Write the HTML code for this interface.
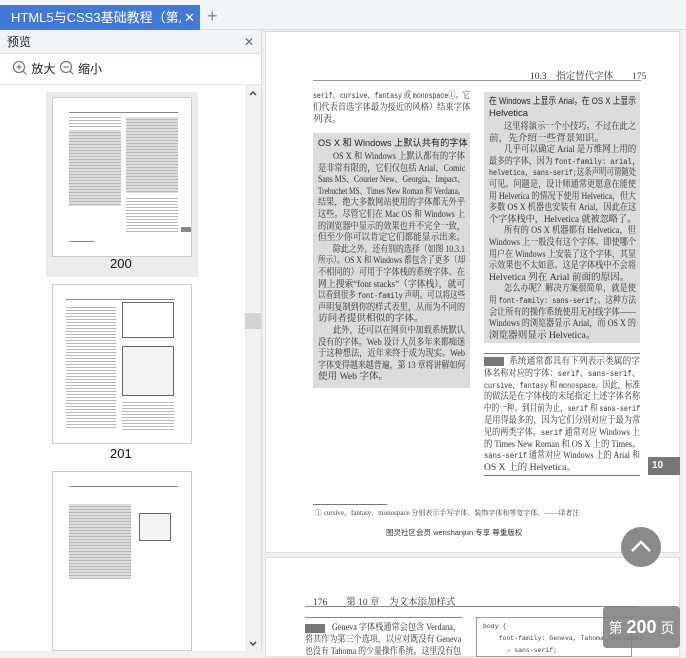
<!DOCTYPE html>
<html><head><meta charset="utf-8"><style>
*{margin:0;padding:0;box-sizing:border-box}
body{width:686px;height:651px;overflow:hidden;background:#f0f0f0;font-family:"Liberation Serif","Noto Serif CJK SC",serif;position:relative;color:#333}
.a{position:absolute;white-space:nowrap}
.s{font-family:"Liberation Sans","Noto Sans CJK SC",sans-serif}
.l{position:absolute;font-size:9.6px;line-height:12px;white-space:nowrap;color:#333;text-align:justify;text-align-last:justify;overflow:hidden;transform-origin:0 0}
.n{text-align-last:left}
.m{font-family:"Liberation Mono",monospace;font-size:8.6px}
.tx{background:repeating-linear-gradient(transparent 0 2px,#b8b8b8 2px 3px)}
</style></head><body>
<!-- top bar -->
<div class="a" style="left:0;top:0;width:686px;height:30px;background:#f3f4f6;border-bottom:1px solid #dde"></div>
<div class="a s" style="left:0;top:5px;width:200px;height:25px;background:#4379d6;color:#fff;font-size:13px;line-height:25px"><span style="position:absolute;left:11px;width:170px;overflow:hidden">HTML5与CSS3基础教程（第八版）</span><span style="position:absolute;left:184px;font-size:13px">✕</span></div>
<div class="a s" style="left:207px;top:5px;font-size:18px;line-height:22px;color:#888">+</div>
<!-- left panel -->
<div class="a" style="left:0;top:30px;width:262px;height:621px;background:#fff;border-right:1px solid #ddd"></div>
<div class="a s" style="left:0;top:30px;width:261px;height:24px;background:#f2f3f5;border-bottom:1px solid #ddd;font-size:12px;line-height:24px;padding-left:7px;color:#222">预览<span style="position:absolute;left:244px;color:#666">✕</span></div>
<div class="a s" style="left:12px;top:60px;font-size:12px;color:#222;line-height:18px">
<svg width="16" height="16" style="vertical-align:-3px" viewBox="0 0 16 16"><circle cx="7" cy="7" r="5.5" fill="none" stroke="#777" stroke-width="1.2"/><path d="M4.5 7h5M7 4.5v5M11 11l3.5 3.5" stroke="#777" stroke-width="1.2"/></svg> 放大 <svg width="16" height="16" style="vertical-align:-3px" viewBox="0 0 16 16"><circle cx="7" cy="7" r="5.5" fill="none" stroke="#777" stroke-width="1.2"/><path d="M4.5 7h5M11 11l3.5 3.5" stroke="#777" stroke-width="1.2"/></svg> 缩小</div>
<div class="a" style="left:0;top:84px;width:261px;height:1px;background:#e5e5e5"></div>
<div class="a" style="left:245px;top:85px;width:16px;height:566px;background:#f0f0f0"></div>
<div class="a" style="left:245px;top:313px;width:16px;height:16px;background:#d4d4d4"></div>
<svg class="a" style="left:249px;top:90px" width="8" height="6"><path d="M1 5L4 2L7 5" fill="none" stroke="#444" stroke-width="1.5"/></svg>
<svg class="a" style="left:249px;top:641px" width="8" height="6"><path d="M1 1L4 4L7 1" fill="none" stroke="#444" stroke-width="1.5"/></svg>
<!-- thumbs -->
<div class="a" style="left:46px;top:92px;width:152px;height:185px;background:#ebebeb"></div>
<div class="a" style="left:52px;top:97px;width:140px;height:160px;background:#fff;border:1px solid #ccc"></div>
<div class="a" style="left:69px;top:112px;width:109px;height:1px;background:#888"></div>
<div class="a tx" style="left:69px;top:115px;width:52px;height:12px"></div>
<div class="a tx" style="left:69px;top:130px;width:52px;height:76px;background-color:#ddd"></div>
<div class="a tx" style="left:126px;top:117px;width:52px;height:76px;background-color:#ddd"></div>
<div class="a tx" style="left:126px;top:196px;width:52px;height:38px"></div>
<div class="a" style="left:181px;top:227px;width:10px;height:5px;background:#888"></div>
<div class="a" style="left:69px;top:241px;width:25px;height:1px;background:#888"></div>
<div class="a s" style="left:110px;top:256px;font-size:13px;color:#111">200</div>
<div class="a" style="left:52px;top:284px;width:140px;height:160px;background:#fff;border:1px solid #ccc"></div>
<div class="a" style="left:66px;top:299px;width:109px;height:1px;background:#888"></div>
<div class="a tx" style="left:66px;top:305px;width:50px;height:125px"></div>
<div class="a" style="left:122px;top:302px;width:52px;height:36px;border:1px solid #666"></div>
<div class="a" style="left:122px;top:346px;width:52px;height:50px;border:1px solid #666;background:#f4f4f4"></div>
<div class="a tx" style="left:122px;top:400px;width:52px;height:30px"></div>
<div class="a s" style="left:110px;top:446px;font-size:13px;color:#111">201</div>
<div class="a" style="left:52px;top:471px;width:140px;height:180px;background:#fff;border:1px solid #ccc"></div>
<div class="a" style="left:69px;top:486px;width:109px;height:1px;background:#888"></div>
<div class="a tx" style="left:69px;top:504px;width:62px;height:75px;background-color:#ddd"></div>
<div class="a" style="left:139px;top:513px;width:32px;height:28px;border:1px solid #666;background:#f4f4f4"></div>
<!-- page 1 -->
<div class="a" style="left:265px;top:31px;width:415px;height:522px;background:#fff;border:1px solid #ddd"></div>
<div class="a" style="left:265px;top:557px;width:415px;height:100px;background:#fff;border:1px solid #ddd"></div>
<div class="a" style="left:682px;top:30px;width:4px;height:621px;background:#f6f6f6"></div>
<div class="a" style="left:530px;top:68px;font-size:9.5px;color:#333">10.3　指定替代字体　　175</div>
<div class="a" style="left:313px;top:80px;width:328px;height:1px;background:#999"></div>
<div class="l" style="left:313px;top:90px;width:157px"><span class="m">serif</span>、<span class="m">cursive</span>、<span class="m">fantasy</span> 或 <span class="m">monospace</span>①。它</div>
<div class="l" style="left:313px;top:102px;width:157px">们代表首选字体最为接近的风格）结束字体</div>
<div class="l n" style="left:313px;top:114px;width:157px">列表。</div>
<div class="a" style="left:313px;top:133px;width:157px;height:255px;background:#dcdcdc"></div>
<div class="l n s" style="left:318px;top:138px;width:150px;font-size:9.5px;color:#222">OS X 和 Windows 上默认共有的字体</div>
<div style="position:absolute;left:318px;top:151px;width:147px">
<div class="l" style="left:15px;top:0;width:132px">OS X 和 Windows 上默认都有的字体</div>
<div class="l" style="top:11.6px;width:147px">是非常有限的，它们仅包括 Arial、Comic</div>
<div class="l" style="top:23.2px;width:147px">Sans MS、Courier New、Georgia、Impact、</div>
<div class="l" style="top:34.8px;width:147px">Trebuchet MS、Times New Roman 和 Verdana。</div>
<div class="l" style="top:46.4px;width:147px">结果，绝大多数网站使用的字体都无外乎</div>
<div class="l" style="top:58px;width:147px">这些。尽管它们在 Mac OS 和 Windows 上</div>
<div class="l" style="top:69.6px;width:147px">的浏览器中显示的效果也并不完全一致，</div>
<div class="l n" style="top:81.2px;width:147px">但至少你可以肯定它们都能显示出来。</div>
<div class="l" style="left:15px;top:92.8px;width:132px">除此之外，还有别的选择（如图 10.3.1</div>
<div class="l" style="top:104.4px;width:147px">所示）。OS X 和 Windows 都包含了更多（却</div>
<div class="l" style="top:116px;width:147px">不相同的）可用于字体栈的系统字体。在</div>
<div class="l" style="top:127.6px;width:147px">网上搜索“font stacks”（字体栈），就可</div>
<div class="l" style="top:139.2px;width:147px">以看到很多 <span class="m">font-family</span> 声明。可以将这些</div>
<div class="l" style="top:150.8px;width:147px">声明复制到你的样式表里，从而为不同的</div>
<div class="l n" style="top:162.4px;width:147px">访问者提供相似的字体。</div>
<div class="l" style="left:15px;top:174px;width:132px">此外，还可以在网页中加载系统默认</div>
<div class="l" style="top:185.6px;width:147px">没有的字体。Web 设计人员多年来都痴迷</div>
<div class="l" style="top:197.2px;width:147px">于这种想法，近年来终于成为现实。Web</div>
<div class="l" style="top:208.8px;width:147px">字体变得越来越普遍，第 13 章将讲解如何</div>
<div class="l n" style="top:220.4px;width:147px">使用 Web 字体。</div>
</div>
<div class="a" style="left:484px;top:92px;width:156px;height:251px;background:#dcdcdc"></div>
<div class="l s" style="left:489px;top:96px;width:147px;color:#222;font-size:9.5px">在 Windows 上显示 Arial，在 OS X 上显示</div>
<div class="l n s" style="left:489px;top:108px;width:147px;color:#222;font-size:9.5px">Helvetica</div>
<div style="position:absolute;left:489px;top:121px;width:147px">
<div class="l" style="left:15px;top:0;width:132px">这里将演示一个小技巧。不过在此之</div>
<div class="l n" style="top:11.6px;width:147px">前，先介绍一些背景知识。</div>
<div class="l" style="left:15px;top:23.2px;width:132px">几乎可以确定 Arial 是万维网上用的</div>
<div class="l" style="top:34.8px;width:147px">最多的字体，因为 <span class="m">font-family: arial,</span></div>
<div class="l" style="top:46.4px;width:147px"><span class="m">helvetica, sans-serif;</span>这条声明可谓随处</div>
<div class="l" style="top:58px;width:147px">可见。问题是，设计师通常更愿意在能使</div>
<div class="l" style="top:69.6px;width:147px">用 Helvetica 的情况下使用 Helvetica，但大</div>
<div class="l" style="top:81.2px;width:147px">多数 OS X 机器也安装有 Arial，因此在这</div>
<div class="l n" style="top:92.8px;width:147px">个字体栈中，Helvetica 就被忽略了。</div>
<div class="l" style="left:15px;top:104.4px;width:132px">所有的 OS X 机器都有 Helvetica，但</div>
<div class="l" style="top:116px;width:147px">Windows 上一般没有这个字体。即使哪个</div>
<div class="l" style="top:127.6px;width:147px">用户在 Windows 上安装了这个字体，其显</div>
<div class="l" style="top:139.2px;width:147px">示效果也不太如意。这是字体栈中不会将</div>
<div class="l n" style="top:150.8px;width:147px">Helvetica 列在 Arial 前面的原因。</div>
<div class="l" style="left:15px;top:162.4px;width:132px">怎么办呢？解决方案很简单，就是使</div>
<div class="l" style="top:174px;width:147px">用 <span class="m">font-family: sans-serif;</span>。这种方法</div>
<div class="l" style="top:185.6px;width:147px">会让所有的操作系统使用无衬线字体——</div>
<div class="l" style="top:197.2px;width:147px">Windows 的浏览器显示 Arial，而 OS X 的</div>
<div class="l n" style="top:208.8px;width:147px">浏览器则显示 Helvetica。</div>
</div>
<div class="a" style="left:484px;top:353px;width:156px;height:1px;background:#777"></div>
<div style="position:absolute;left:484px;top:356px;width:156px">
<div class="a" style="left:0;top:1px;width:20px;height:9px;background:#777"></div>
<div class="l" style="left:25px;top:0;width:131px">系统通常都具有下列表示类属的字</div>
<div class="l" style="top:11.8px;width:156px">体名称对应的字体：<span class="m">serif</span>、<span class="m">sans-serif</span>、</div>
<div class="l" style="top:23.6px;width:156px"><span class="m">cursive</span>、<span class="m">fantasy</span> 和 <span class="m">monospace</span>。因此，标准</div>
<div class="l" style="top:35.4px;width:156px">的做法是在字体栈的末尾指定上述字体名称</div>
<div class="l" style="top:47.2px;width:156px">中的一种。到目前为止，<span class="m">serif</span> 和 <span class="m">sans-serif</span></div>
<div class="l" style="top:59px;width:156px">是用得最多的，因为它们分别对应于最为常</div>
<div class="l" style="top:70.8px;width:156px">见的两类字体。<span class="m">serif</span> 通常对应 Windows 上</div>
<div class="l" style="top:82.6px;width:156px">的 Times New Roman 和 OS X 上的 Times。</div>
<div class="l" style="top:94.4px;width:156px"><span class="m">sans-serif</span> 通常对应 Windows 上的 Arial 和</div>
<div class="l n" style="top:106.2px;width:156px">OS X 上的 Helvetica。</div>
</div>
<div class="a" style="left:484px;top:475px;width:156px;height:1px;background:#777"></div>
<div class="a s" style="left:648px;top:457px;width:32px;height:18px;background:#777;color:#fff;font-size:10px;font-weight:bold;line-height:18px;padding-left:4px">10</div>
<div class="a" style="left:313px;top:504px;width:74px;height:1px;background:#777"></div>
<div class="a" style="left:315px;top:508px;font-size:7px;color:#444">① cursive、fantasy、monospace 分别表示手写字体、装饰字体和等宽字体。——译者注</div>
<div class="a s" style="left:386px;top:527px;font-size:7.5px;color:#333">图灵社区会员 wenshanjun 专享 尊重版权</div>
<!-- page 2 -->
<div class="a" style="left:313px;top:594px;font-size:9.5px;color:#333">176　　第 10 章　为文本添加样式</div>
<div class="a" style="left:305px;top:606px;width:330px;height:1px;background:#888"></div>
<div class="a" style="left:305px;top:617px;width:157px;height:1px;background:#888"></div>
<div class="a" style="left:305px;top:624px;width:20px;height:9px;background:#777"></div>
<div class="l" style="left:332px;top:622px;width:129px">Geneva 字体栈通常会包含 Verdana，</div>
<div class="l" style="left:305px;top:634px;width:156px">将其作为第三个选项，以应对既没有 Geneva</div>
<div class="l" style="left:305px;top:646px;width:156px">也没有 Tahoma 的少量操作系统。这里没有包</div>
<div class="a" style="left:476px;top:617px;width:156px;height:40px;border:1px solid #999;background:#fff"></div>
<div class="a m" style="left:483px;top:621px;font-size:6.5px;line-height:12px;color:#444">body {<br>&nbsp;&nbsp;&nbsp;&nbsp;font-family: Geneva, Tahoma, Verdana,<br>&nbsp;&nbsp;&nbsp;&nbsp;&nbsp;&nbsp;→ sans-serif;</div>
<!-- overlays -->
<div class="a" style="left:621px;top:527px;width:40px;height:40px;border-radius:50%;background:#8a8a8a"></div>
<svg class="a" style="left:629px;top:537px" width="24" height="18" viewBox="0 0 24 18"><path d="M3 14L12 5L21 14" fill="none" stroke="#fff" stroke-width="2.5"/></svg>
<div class="a s" style="left:603px;top:606px;width:77px;height:42px;border-radius:4px;background:rgba(128,128,128,.88);color:#fff;font-size:14px;line-height:42px;text-align:center">第 <b style="font-size:18px">200</b> 页</div>
<script>
document.querySelectorAll('.l').forEach(function(e){var w=e.clientWidth,s=e.scrollWidth;if(s>w+1){e.style.width=s+'px';e.style.transform='scaleX('+(w/s)+')';}});
</script>
</body></html>
